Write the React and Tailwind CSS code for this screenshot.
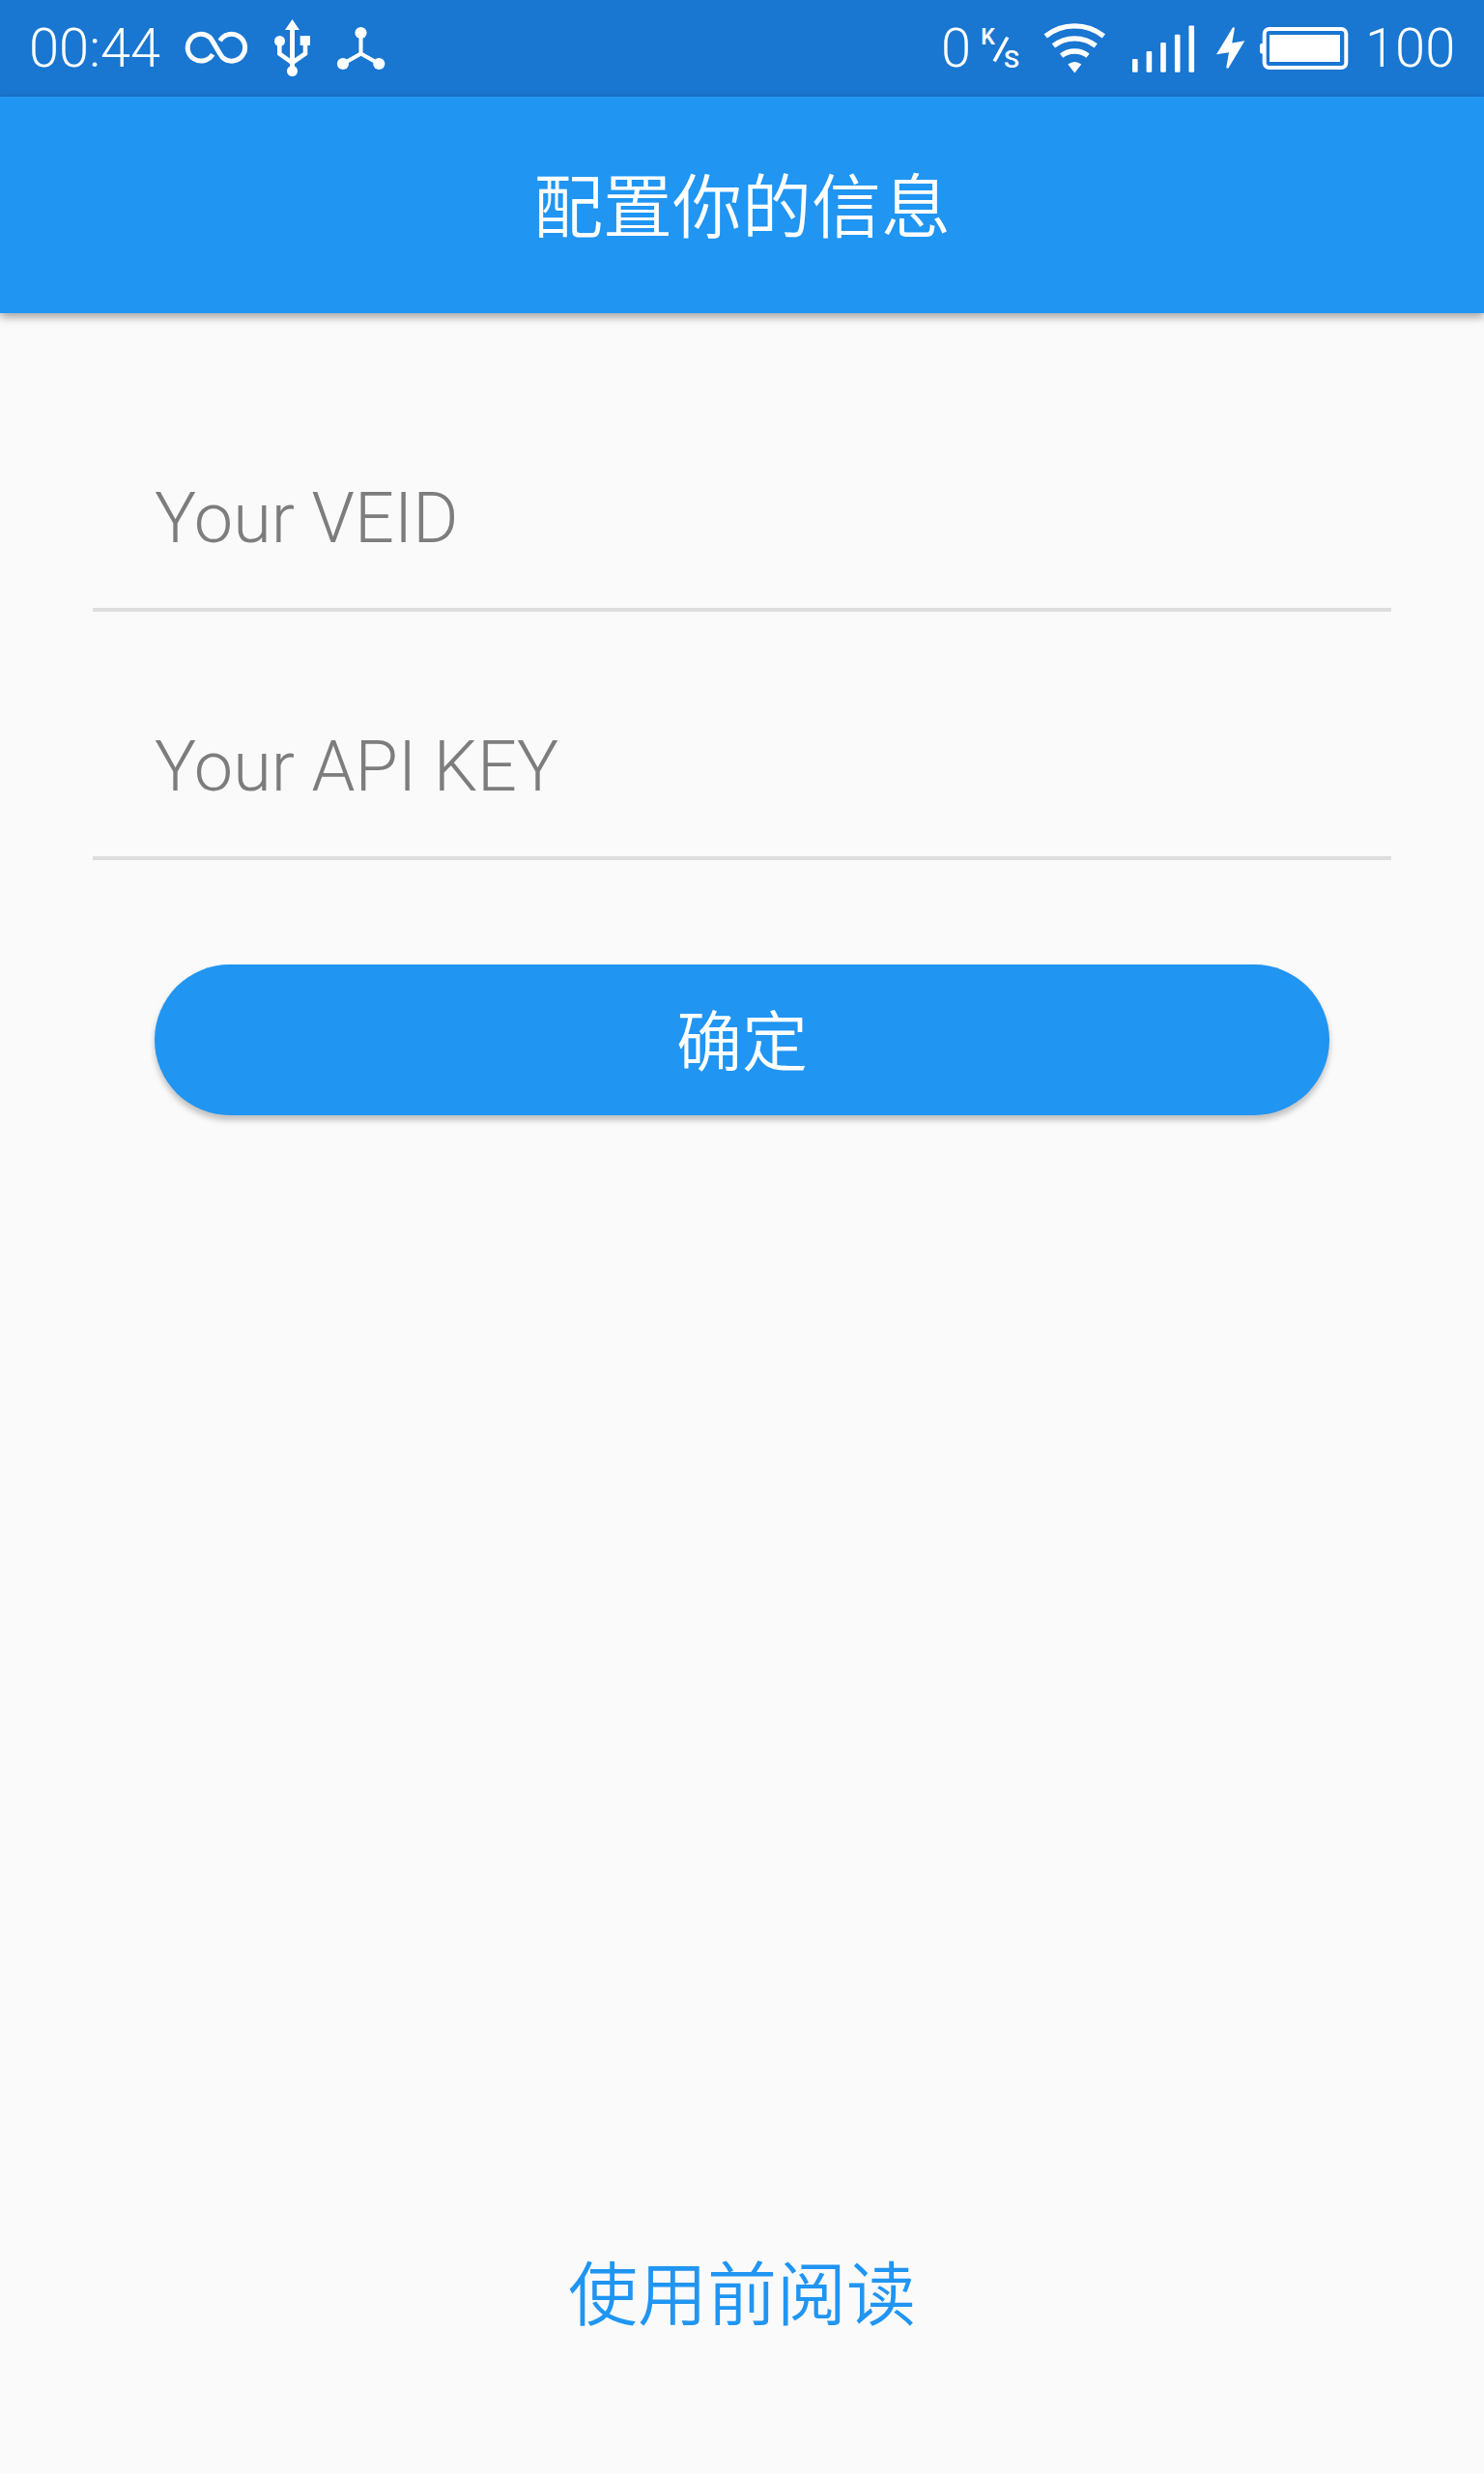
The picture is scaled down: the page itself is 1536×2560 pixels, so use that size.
function InfinityIcon() {
  return (
    <svg className="h-[100px] w-[66px] shrink-0" viewBox="191 0 66 100" fill="none" stroke="white" strokeWidth="5">
      <path d="M220.1 56.2 A13.9 13.9 0 1 1 217 38.5 C219.8 40.9 228 57.5 230.8 59.9 A13.9 13.9 0 1 0 227.7 42.2" />
    </svg>
  );
}

function UsbIcon() {
  return (
    <svg className="h-[100px] w-[40px] shrink-0" viewBox="283 0 40 100" fill="white">
      <path d="M302.5 20 L310 31 H295 Z" />
      <circle cx="289.5" cy="42.5" r="5.5" />
      <rect x="310.7" y="37" width="10.3" height="10" />
      <circle cx="302.5" cy="73.5" r="5.5" />
      <path d="M302.5 28 V72" fill="none" stroke="white" strokeWidth="5" />
      <path d="M289.3 43 V55.5 L302.5 65 L316 55.5 V45" fill="none" stroke="white" strokeWidth="4.6" />
    </svg>
  );
}

function HubIcon() {
  return (
    <svg className="h-[100px] w-[50px] shrink-0" viewBox="349 0 50 100" fill="white">
      <circle cx="373.5" cy="34" r="6.1" />
      <circle cx="355" cy="66" r="6.1" />
      <circle cx="392.3" cy="66" r="6.1" />
      <path d="M373.5 34 V55.5 L355 66 M373.5 55.5 L392.3 66" fill="none" stroke="white" strokeWidth="4.1" />
    </svg>
  );
}

function SpeedUnit() {
  return (
    <svg className="h-[100px] w-[42px] shrink-0" viewBox="1015 0 42 100" fill="white">
      <text x="1015.3" y="46.3" fontFamily="Roboto" fontWeight="600" fontSize="23">K</text>
      <path d="M1042.8 38.5 L1029.2 63.3" stroke="white" strokeWidth="3.6" />
      <text x="1039" y="70.2" fontFamily="Roboto" fontWeight="500" fontSize="26.5">S</text>
    </svg>
  );
}

function WifiIcon() {
  return (
    <svg className="h-[100px] w-[66px] shrink-0" viewBox="1079 0 66 100" fill="none" stroke="white" strokeWidth="5.3">
      <path d="M1082.2 37.3 A48.5 48.5 0 0 1 1142.4 37.3" />
      <path d="M1090.4 47.4 A35.5 35.5 0 0 1 1134.2 47.4" />
      <path d="M1098.6 57.7 A22.4 22.4 0 0 1 1126 57.7" />
      <path d="M1105.3 66.5 Q1112.3 61.5 1119.3 66.5 L1112.3 75.5 Z" fill="white" stroke="none" />
    </svg>
  );
}

function SignalIcon() {
  return (
    <svg className="h-[100px] w-[66px] shrink-0" viewBox="1171 0 66 100" fill="white">
      <rect x="1172" y="61" width="5.6" height="13.7" rx="1" />
      <rect x="1186.6" y="53" width="5.6" height="21.7" rx="1" />
      <rect x="1201.2" y="44" width="5.6" height="30.7" rx="1" />
      <rect x="1215.9" y="35.7" width="5.6" height="39" rx="1" />
      <rect x="1230.5" y="26.5" width="5.6" height="48.2" rx="1" />
    </svg>
  );
}

function BatteryIcon() {
  return (
    <svg className="h-[100px] w-[138px] shrink-0" viewBox="1258 0 138 100" fill="white">
      <path d="M1276 28.3 L1278 28.7 L1275.2 44.5 L1288.3 42.3 L1271.3 70.8 L1269.2 70.2 L1272 54.3 L1259 56.3 Z" />
      <rect x="1304" y="45" width="5" height="10.5" rx="2" />
      <rect x="1308.7" y="29.9" width="84.6" height="40.2" rx="5" fill="none" stroke="white" strokeWidth="4" />
      <rect x="1314" y="36" width="73" height="28" />
    </svg>
  );
}

function StatusBar() {
  return (
    <div className="flex h-[100px] shrink-0 items-center bg-[#1976d1] pr-[31px] pl-[30px] text-[56px] leading-none text-white">
      <span className="w-[161px] shrink-0 whitespace-nowrap">00:44</span>
      <InfinityIcon />
      <div className="ml-[26px] flex gap-[26px]">
        <UsbIcon />
        <HubIcon />
      </div>
      <div className="ml-auto flex items-center">
        <span className="w-[41px]">0</span>
        <SpeedUnit />
        <div className="ml-[22px] flex gap-[26px]">
          <WifiIcon />
          <SignalIcon />
        </div>
        <div className="ml-[21px]">
          <BatteryIcon />
        </div>
        <span className="ml-[17px] w-[92px] whitespace-nowrap">100</span>
      </div>
    </div>
  );
}

function Field({ label }) {
  return (
    <label className="flex h-[157px] w-full border-b-4 border-[#dedede] px-16 pt-[19px]">
      <input
        placeholder={label}
        className="h-[84px] w-full bg-transparent text-[72px] leading-[84px] font-light outline-none placeholder:text-[#7d7d7d] placeholder:opacity-100"
      />
    </label>
  );
}

export default function App() {
  return (
    <div className="flex h-[2560px] w-[1536px] flex-col overflow-hidden bg-[#fafafa] font-['Roboto','Noto_Sans_CJK_SC',sans-serif] font-light">
      <StatusBar />
      <header className="flex h-[224px] shrink-0 items-center justify-center bg-[#2095f2] pt-2 shadow-[0_4px_9px_rgba(0,0,0,0.36)]">
        <h1 className="text-[72px] leading-none font-[350] text-white">配置你的信息</h1>
      </header>
      <main className="flex flex-1 flex-col items-center px-24 pt-[152px]">
        <div className="flex w-full flex-col gap-[100px]">
          <Field label="Your VEID" />
          <Field label="Your API KEY" />
        </div>
        <button className="mt-[108px] flex h-[156px] w-[1216px] shrink-0 items-center justify-center rounded-full bg-[#2095f2] pt-2 text-[68px] leading-none font-[350] text-white shadow-[0_5px_6px_rgba(0,0,0,0.24)]">
          确定
        </button>
        <a className="mt-auto mb-[148px] text-[72px] leading-none font-[350] text-[#2095f2]">使用前阅读</a>
      </main>
    </div>
  );
}
